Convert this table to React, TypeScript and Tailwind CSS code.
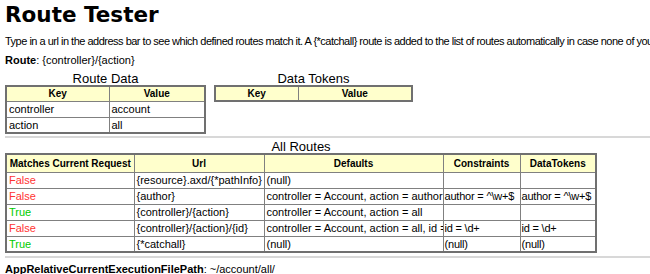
import { ReactNode } from 'react';

// ── Data ─────────────────────────────────────────────────────────────────────

const ROUTE_DATA = [
  { key: 'controller', value: 'account' },
  { key: 'action',     value: 'all' },
];

type RouteRow = { match: boolean; url: string; defaults: string; constraints: string; tokens: string };

const ALL_ROUTES: RouteRow[] = [
  { match: false, url: '{resource}.axd/{*pathInfo}', defaults: '(null)',                                   constraints: '',                tokens: '' },
  { match: false, url: '{author}',                   defaults: 'controller = Account, action = author',    constraints: 'author = ^\\w+$', tokens: 'author = ^\\w+$' },
  { match: true,  url: '{controller}/{action}',      defaults: 'controller = Account, action = all',       constraints: '',                tokens: '' },
  { match: false, url: '{controller}/{action}/{id}', defaults: 'controller = Account, action = all, id =', constraints: 'id = \\d+',       tokens: 'id = \\d+' },
  { match: true,  url: '{*catchall}',                defaults: '(null)',                                   constraints: '(null)',          tokens: '(null)' },
];

// ── Bits ─────────────────────────────────────────────────────────────────────

function Th({ children, className = '' }: { children: ReactNode; className?: string }) {
  return (
    <th className={`border border-[#808080] bg-[#ffffcc] h-[15px] px-[2px] py-0 text-center font-bold text-[10px] leading-[13px] whitespace-nowrap overflow-hidden ${className}`}>
      {children}
    </th>
  );
}

function Td({ children, className = '' }: { children?: ReactNode; className?: string }) {
  return (
    <td className={`border border-[#808080] h-[16px] px-[2px] py-0 text-left text-[11px] leading-[14px] whitespace-nowrap overflow-hidden ${className}`}>
      {children}
    </td>
  );
}

function Caption({ children }: { children: ReactNode }) {
  return <caption className="text-[13px] leading-[13px] text-black">{children}</caption>;
}

// ── Main ─────────────────────────────────────────────────────────────────────

export default function App() {
  return (
    <div className="w-[650px] h-[274px] overflow-hidden bg-white text-black px-[5px] pt-[3px] font-['Liberation_Sans',Arial,sans-serif] text-[11px]">
      <h1 className="font-['DejaVu_Sans',Verdana,sans-serif] text-[21.5px] leading-[24px] font-bold">Route Tester</h1>

      <p className="mt-[7px] leading-[14px] whitespace-nowrap tracking-[-0.5px]">
        Type in a url in the address bar to see which defined routes match it. A {'{*catchall}'} route is added to the list of routes automatically in case none of your routes match.
      </p>

      <p className="mt-[5px] leading-[14px]">
        <span className="font-bold">Route</span>: {'{controller}/{action}'}
      </p>

      {/* ── Route data / tokens ── */}
      <div className="flex items-start gap-[8px] mt-[5px]">
        <table className="table-fixed border-collapse border-2 border-[#707070] w-[201px]">
          <Caption>Route Data</Caption>
          <thead>
            <tr>
              <Th className="w-[103px]">Key</Th>
              <Th>Value</Th>
            </tr>
          </thead>
          <tbody>
            {ROUTE_DATA.map(r => (
              <tr key={r.key}>
                <Td>{r.key}</Td>
                <Td>{r.value}</Td>
              </tr>
            ))}
          </tbody>
        </table>

        <table className="table-fixed border-collapse border-2 border-[#707070] w-[199px]">
          <Caption>Data Tokens</Caption>
          <thead>
            <tr>
              <Th className="w-[83px]">Key</Th>
              <Th>Value</Th>
            </tr>
          </thead>
        </table>
      </div>

      <div className="h-[2px] bg-[#d8d8d8] mt-[2px] -mr-[5px]" />

      {/* ── All routes ── */}
      <table className="table-fixed border-collapse border-2 border-[#707070] w-[592px] mt-[2px]">
        <Caption>All Routes</Caption>
        <thead>
          <tr>
            <Th className="w-[128px] h-[18px]">Matches Current Request</Th>
            <Th className="w-[130px]">Url</Th>
            <Th className="w-[179px]">Defaults</Th>
            <Th className="w-[77px]">Constraints</Th>
            <Th>DataTokens</Th>
          </tr>
        </thead>
        <tbody>
          {ALL_ROUTES.map((r, i) => (
            <tr key={i}>
              <Td className={r.match ? 'text-[#00cc00]' : 'text-[#ff3333]'}>{r.match ? 'True' : 'False'}</Td>
              <Td>{r.url}</Td>
              <Td>{r.defaults}</Td>
              <Td className="pl-[1px] pr-0 tracking-[-0.2px]">{r.constraints}</Td>
              <Td className="pl-[1px] pr-0 tracking-[-0.2px]">{r.tokens}</Td>
            </tr>
          ))}
        </tbody>
      </table>

      <div className="h-[2px] bg-[#d8d8d8] mt-[3px] -mr-[5px]" />

      <p className="mt-[4px] leading-[14px]">
        <span className="font-bold">AppRelativeCurrentExecutionFilePath</span>: ~/account/all/
      </p>
    </div>
  );
}
